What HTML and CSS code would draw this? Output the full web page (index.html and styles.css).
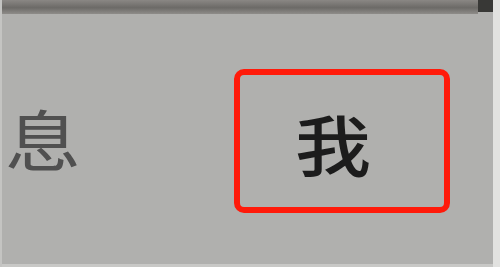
FILE: index.html
```html
<!DOCTYPE html>
<html lang="zh-CN">
<head>
    <meta charset="UTF-8">
    <meta name="viewport" content="width=device-width, initial-scale=1.0">
    <title>我</title>
    <link rel="stylesheet" href="styles.css">
</head>
<body>
    <div class="screen">
        <div class="main">
            <div class="topbar">
                <div class="topbar-fill"></div>
                <div class="topbar-end"></div>
            </div>
            <nav class="tabbar">
                <div class="tab tab-msg"><span class="label">息</span></div>
                <div class="tab tab-me active"><span class="label">我</span></div>
            </nav>
            <div class="bottom-edge"></div>
        </div>
        <div class="side-edge"></div>
    </div>
</body>
</html>
```

FILE: styles.css
```css
body {
    margin: 0;
    padding: 0;
    overflow: hidden;
    font-family: "Noto Sans CJK SC", "Noto Sans", sans-serif;
}
.screen {
    display: flex;
    width: 500px;
    height: 267px;
    background-color: #b0b0ae;
}
.main {
    display: flex;
    flex-direction: column;
    width: 493px;
    border-left: 2px solid #c4c4c2;
    box-sizing: border-box;
}
.topbar {
    display: flex;
    height: 14px;
}
.topbar-fill {
    flex: 1;
    background: linear-gradient(to bottom, #8a8784 0%, #6c6a67 55%, #8e8c89 100%);
}
.topbar-end {
    width: 15px;
    height: 12px;
    background-color: #383836;
}
.tabbar {
    flex: 1;
    display: flex;
    align-items: flex-start;
    padding-top: 55px;
}
.tab {
    display: flex;
    align-items: center;
    height: 144px;
    box-sizing: border-box;
    font-size: 66px;
    line-height: 1;
}
.label {
    display: block;
    transform: scaleX(1.15);
}
.tab-msg {
    width: 232px;
    color: #505050;
}
.tab-msg .label {
    margin-left: 8px;
    margin-top: -8px;
}
.tab-me {
    width: 216px;
    justify-content: center;
    color: #1c1c1c;
    font-weight: 500;
}
.tab-me .label {
    margin-left: -18px;
    margin-top: 2px;
}
.tab.active {
    border: 6px solid #ff1a0a;
    border-radius: 10px;
}
.bottom-edge {
    height: 3px;
    background-color: #c8c8c6;
}
.side-edge {
    width: 7px;
    background-color: #e2e2e0;
}
```
